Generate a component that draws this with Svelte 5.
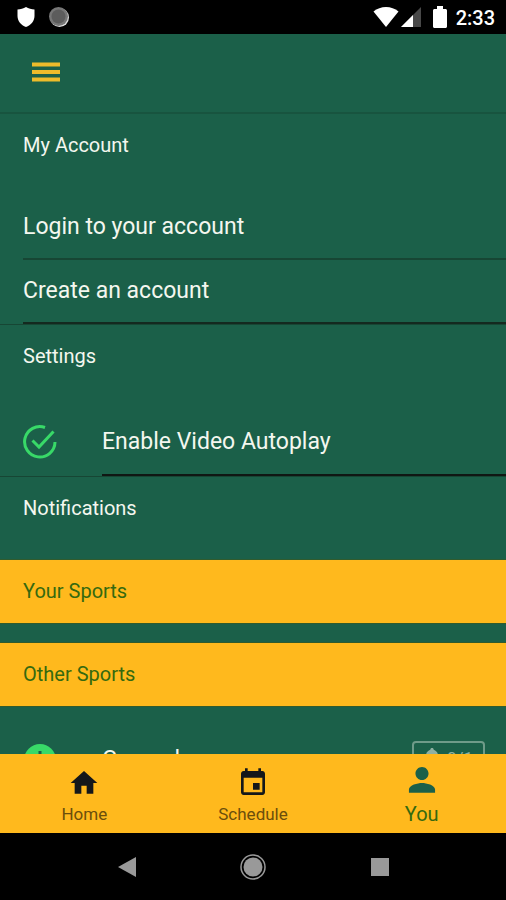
<script>
    const accountLinks = ["Login to your account", "Create an account"]

    const tabs = [
        { id: "home", label: "Home" },
        { id: "schedule", label: "Schedule" },
        { id: "you", label: "You" },
    ]

    let current = $state("you")
    let autoplay = $state(true)
</script>

<div class="app">
    <div class="status-bar">
        <div class="status-group left">
            <svg width="18" height="20" viewBox="0 0 18 20">
                <path fill="#fff" d="M9 0C6.500 1.700 3.500 2.300 0.500 2.400V9c0 5 3.500 9 8.500 11 5-2 8.500-6 8.500-11V2.400C14.500 2.300 11.500 1.700 9 0z" />
            </svg>
            <svg width="20" height="20" viewBox="0 0 20 20">
                <circle cx="10.500" cy="10.500" r="9.500" fill="#ddd" />
                <circle cx="9.500" cy="9.500" r="9.500" fill="#777" />
                <circle cx="9.500" cy="9.500" r="7" fill="#5c5c5c" />
            </svg>
        </div>
        <div class="status-group right">
            <svg width="26" height="20" viewBox="0 0 26 20">
                <path fill="#fff" d="M13 20L0.500 4.500C4 1.500 8.300 0 13 0s9 1.500 12.500 4.500z" />
            </svg>
            <svg class="signal" width="20" height="20" viewBox="0 0 20 20">
                <path fill="#484848" d="M20 0V20H0z" />
                <path fill="#fff" d="M12 8V20H0z" />
            </svg>
            <svg class="battery" width="14" height="22" viewBox="0 0 14 22">
                <path fill="#fff" d="M4 0h6v3h2.500c.8 0 1.500.7 1.500 1.500v16c0 .8-.7 1.500-1.500 1.500h-11C.7 22 0 21.300 0 20.500v-16C0 3.700.7 3 1.500 3H4z" />
            </svg>
            <span class="clock">2:33</span>
        </div>
    </div>

    <header>
        <button class="menu-button" aria-label="Menu">
            <svg width="28" height="20" viewBox="0 0 28 20">
                <path fill="#edbb2b" d="M0 0.500h28v4H0zM0 8h28v4H0zM0 15.500h28v4H0z" />
            </svg>
        </button>
    </header>

    <main>
        <section>
            <h2>My Account</h2>
            <ul>
                {#each accountLinks as link}
                    <li><a class="row" href="#account">{link}</a></li>
                {/each}
            </ul>
        </section>

        <section>
            <h2>Settings</h2>
            <label class="item">
                <span class="item-icon">
                    <input type="checkbox" bind:checked={autoplay} />
                    <svg width="34" height="34" viewBox="0 0 34 34" fill="none" stroke="#38d968" stroke-width="3">
                        <path d="M22 2.500A15.200 15.200 0 1 0 32 17" />
                        {#if autoplay}
                            <path d="M9.500 15.500l6.500 6.500L30.500 6.500" />
                        {/if}
                    </svg>
                </span>
                <span class="item-text dark-line">Enable Video Autoplay</span>
            </label>
        </section>

        <section>
            <h2>Notifications</h2>
            <h3>Your Sports</h3>
            <h3>Other Sports</h3>
            <div class="item">
                <span class="item-icon">
                    <svg width="34" height="34" viewBox="0 0 34 34">
                        <circle cx="17" cy="17" r="16" fill="#38d968" />
                        <path fill="#1b6049" d="M15.500 8h3v3.500h-3zM15.500 14.500h3V26h-3z" />
                    </svg>
                </span>
                <span class="item-text">General</span>
                <button class="count">
                    <svg width="16" height="20" viewBox="0 0 16 20">
                        <path fill="currentColor" d="M8 0c1 0 1.700.7 1.700 1.700C12.300 2.500 14 4.800 14 7.500V13l2 2v1H0v-1l2-2V7.500c0-2.700 1.700-5 4.300-5.800C6.300.7 7 0 8 0zM6 17h4a2 2 0 0 1-4 0z" />
                    </svg>
                    0/1
                </button>
            </div>
        </section>
    </main>

    <nav class="tabs">
        {#each tabs as tab}
            <button
                class="tab"
                class:active={current === tab.id}
                onclick={() => current = tab.id}
            >
                <svg width="32" height="32" viewBox="0 0 24 24">
                    {#if tab.id === "home"}
                        <path d="M10 20v-6h4v6h5v-8h3L12 3 2 12h3v8z" />
                    {:else if tab.id === "schedule"}
                        <path d="M17 12h-5v5h5v-5zM16 1v2H8V1H6v2H5c-1.110 0-2 .9-2 2v14c0 1.100.89 2 2 2h14c1.100 0 2-.9 2-2V5c0-1.100-.9-2-2-2h-1V1h-2zm3 18H5V8h14v11z" />
                    {:else}
                        <path d="M12 12c2.700 0 4.900-2.200 4.900-4.900S14.700 2.200 12 2.200 7.100 4.400 7.100 7.100 9.300 12 12 12zm0 2.200c-3.200 0-9.800 1.600-9.800 4.900v2.400h19.600v-2.400c0-3.300-6.600-4.900-9.800-4.900z" />
                    {/if}
                </svg>
                <span>{tab.label}</span>
            </button>
        {/each}
    </nav>

    <div class="system-nav">
        <button aria-label="Back">
            <svg width="18" height="20" viewBox="0 0 18 20"><path d="M18 0v20L0 10z" /></svg>
        </button>
        <button aria-label="Home screen">
            <svg width="26" height="26" viewBox="0 0 26 26">
                <circle cx="13" cy="13" r="12" fill="none" stroke="#999" stroke-width="1.500" />
                <circle cx="13" cy="13" r="9.500" />
            </svg>
        </button>
        <button aria-label="Recent apps">
            <svg width="18" height="18" viewBox="0 0 18 18"><path d="M0 0h18v18H0z" /></svg>
        </button>
    </div>
</div>

<style>
    :global(body) {
        margin: 0;
        background-color: #000;
    }
    .app {
        --green: #1b6049;
        --gold: #ffb91d;
        display: flex;
        flex-direction: column;
        height: 100vh;
        overflow: hidden;
        background-color: var(--green);
        color: #f4f7ef;
        font-family: Roboto, sans-serif;
    }
    svg {
        display: block;
        flex: none;
    }
    button {
        border: none;
        padding: 0;
        background-color: transparent;
        color: inherit;
        font: inherit;
        cursor: pointer;
    }

    .status-bar {
        display: flex;
        flex: none;
        justify-content: space-between;
        height: 34px;
        padding: 0 11px 0 17px;
        background-color: #000;
        color: #fff;
    }
    .status-group {
        display: flex;
        align-items: center;
    }
    .left {
        gap: 14px;
    }
    .signal {
        margin-left: 2px;
    }
    .battery {
        margin-left: 12px;
    }
    .clock {
        margin-left: 9px;
        padding-top: 2px;
        font-size: 20px;
        font-weight: 500;
    }

    header {
        display: flex;
        flex: none;
        align-items: center;
        box-sizing: border-box;
        height: 80px;
        padding: 0 24px 2px;
        border-bottom: 2px solid #18543f;
    }
    .menu-button {
        padding: 8px;
    }

    main {
        flex: 1;
        min-height: 0;
        overflow: hidden;
    }
    section + section {
        border-top: 1px solid #174634;
    }
    h2 {
        margin: 0 0 20px;
        padding: 0 23px;
        font-size: 20px;
        font-weight: 400;
        line-height: 62px;
    }
    h3 {
        margin: 0 0 18px;
        padding: 0 23px;
        border: 1px solid #315b2d;
        border-width: 1px 0;
        background-color: var(--gold);
        color: #35690f;
        font-size: 20px;
        font-weight: 400;
        line-height: 63px;
    }
    ul {
        margin: 0;
        padding: 0 0 0 23px;
        list-style: none;
    }
    .row {
        display: block;
        border-bottom: 2px solid #174634;
        color: inherit;
        font-size: 23px;
        line-height: 62px;
        text-decoration: none;
    }
    li:last-child .row {
        border-color: #14291f;
    }

    .item {
        display: flex;
        align-items: center;
        padding-left: 23px;
        font-size: 23px;
    }
    .item-icon {
        position: relative;
        width: 79px;
    }
    .item-icon input {
        position: absolute;
        width: 34px;
        height: 34px;
        margin: 0;
        opacity: 0;
    }
    .item-text {
        flex: 1;
        padding-top: 3px;
        border-bottom: 2px solid transparent;
        line-height: 64px;
    }
    .dark-line {
        border-color: #101713;
    }
    .count {
        display: flex;
        align-items: center;
        gap: 7px;
        height: 38px;
        margin-right: 21px;
        padding: 0 10px 4px;
        border: 2px solid #6f9b89;
        border-radius: 4px;
        color: #8fb0a2;
        font-size: 17px;
    }

    .tabs {
        display: flex;
        flex: none;
        height: 79px;
        background-color: var(--gold);
        color: #6b4e0c;
        font-size: 17px;
        line-height: 24px;
    }
    .tab {
        display: flex;
        flex: 1;
        flex-direction: column;
        align-items: center;
        justify-content: flex-end;
        gap: 3px;
        padding-bottom: 7px;
    }
    .tab svg {
        fill: #14171a;
    }
    .tab.active {
        gap: 6px;
        color: #35690f;
        font-size: 20px;
    }
    .tab.active svg {
        fill: var(--green);
    }

    .system-nav {
        display: flex;
        flex: none;
        height: 67px;
        padding: 0 12.5%;
        background-color: #000;
    }
    .system-nav button {
        display: flex;
        flex: 1;
        align-items: center;
        justify-content: center;
    }
    .system-nav svg {
        fill: #999;
    }
</style>
